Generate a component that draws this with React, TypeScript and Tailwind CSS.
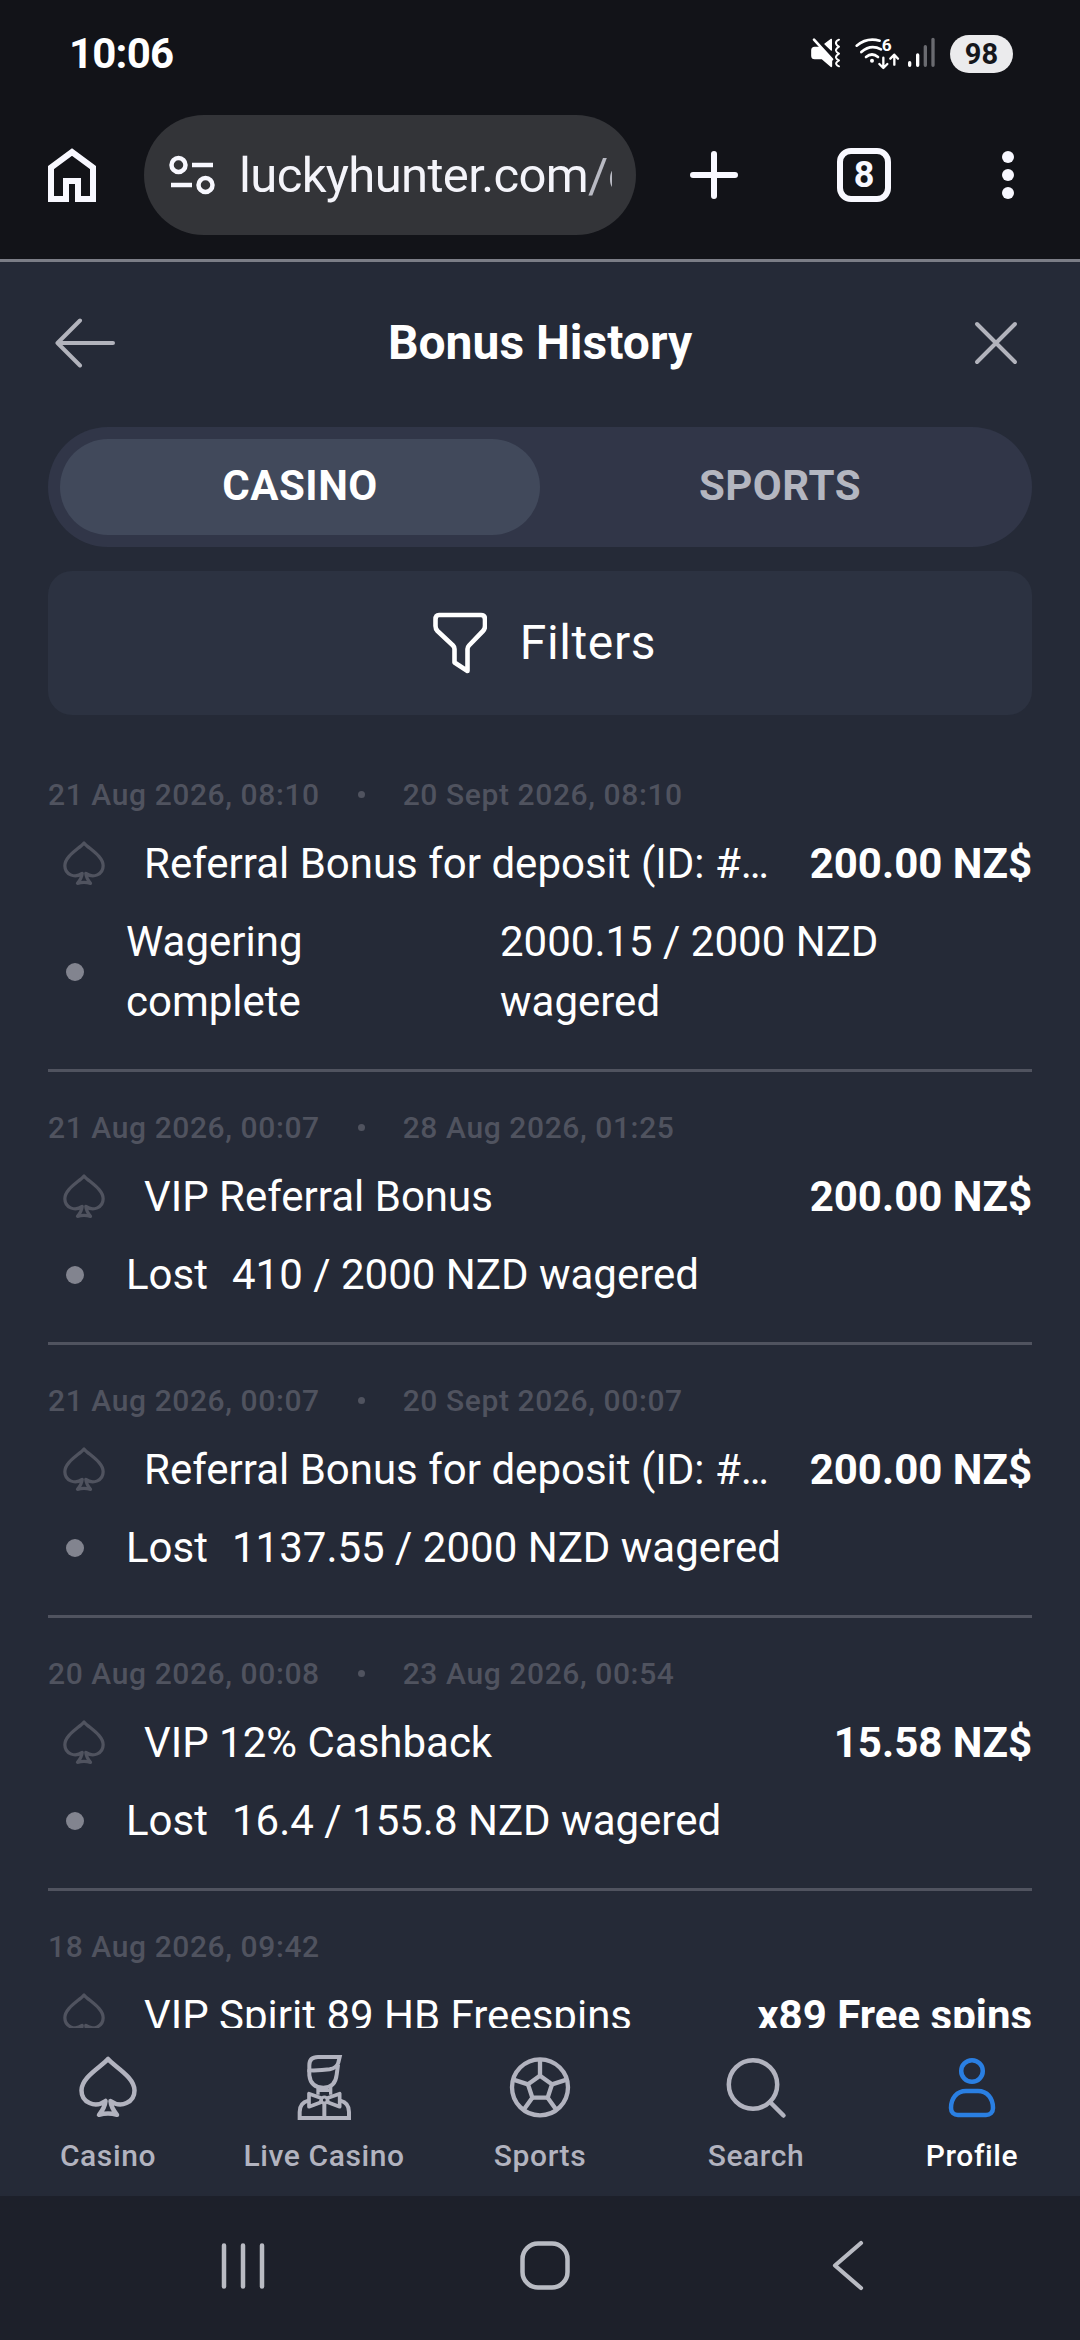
import type { ReactNode } from 'react'
import clsx from 'clsx'

type Bonus = {
  from: string
  to?: string
  title: string
  amount: string
  status: string
  wagered: string
  wide?: boolean
}

const bonuses: Bonus[] = [
  {
    from: '21 Aug 2026, 08:10',
    to: '20 Sept 2026, 08:10',
    title: 'Referral Bonus for deposit (ID: #…',
    amount: '200.00 NZ$',
    status: 'Wagering complete',
    wagered: '2000.15 / 2000 NZD wagered',
    wide: true
  },
  {
    from: '21 Aug 2026, 00:07',
    to: '28 Aug 2026, 01:25',
    title: 'VIP Referral Bonus',
    amount: '200.00 NZ$',
    status: 'Lost',
    wagered: '410 / 2000 NZD wagered'
  },
  {
    from: '21 Aug 2026, 00:07',
    to: '20 Sept 2026, 00:07',
    title: 'Referral Bonus for deposit (ID: #…',
    amount: '200.00 NZ$',
    status: 'Lost',
    wagered: '1137.55 / 2000 NZD wagered'
  },
  {
    from: '20 Aug 2026, 00:08',
    to: '23 Aug 2026, 00:54',
    title: 'VIP 12% Cashback',
    amount: '15.58 NZ$',
    status: 'Lost',
    wagered: '16.4 / 155.8 NZD wagered'
  },
  {
    from: '18 Aug 2026, 09:42',
    title: 'VIP Spirit 89 HB Freespins',
    amount: 'x89 Free spins',
    status: '',
    wagered: ''
  }
]

function Spade({ className }: { className?: string }) {
  return (
    <svg className={className} viewBox="0 0 72 72" fill="none" stroke="currentColor" strokeWidth={4.5} strokeLinecap="round" strokeLinejoin="round">
      <path d="M36 7C29 15 9.500 25 9.500 38.500C9.500 50.500 23 56.500 33.500 49C33 55 30.500 58.500 27 62.800C33 61 39 61 45 62.800C41.500 58.500 39 55 38.500 49C49 56.500 62.500 50.500 62.500 38.500C62.500 25 43 15 36 7Z" />
    </svg>
  )
}

function StatusIcons() {
  return (
    <svg className="w-[140px] h-[60px]" viewBox="0 0 420 180" fill="none" stroke="#fff" strokeLinecap="round" strokeLinejoin="round">
      {/* muted speaker with vibration */}
      <path d="M42 47L96 106" strokeWidth={8} />
      <path d="M94 46V78L75 60Z" fill="#fff" strokeWidth={4} />
      <path d="M44 71H58L94 108V127L66 103H44Q36 103 36 95V79Q36 71 44 71Z" fill="#fff" strokeWidth={5} />
      <path d="M117 47Q106 52 108 59Q110 65 117 68Q107 74 108 80Q109 85 117 89Q107 95 108 101Q109 106 117 109Q106 116 109 121Q111 125 117 127" strokeWidth={6} />
      {/* wifi */}
      <path d="M170 65Q201 39 239 50M184 84Q212 59 243 76M198 99Q216 84 234 99" strokeWidth={8} />
      <circle cx="216" cy="110" r="6" fill="#fff" stroke="none" />
      <text x="245" y="80" fontSize="52" fontWeight="700" fontFamily="Roboto, sans-serif" fill="#fff" stroke="none">6</text>
      <path d="M250 101V131M238 120L250 132L262 120M283 122V93M271 104L283 92L294 104" strokeWidth={7} />
      {/* signal strength */}
      <path d="M329 116V124M353 93V124" strokeWidth={10} />
      <path d="M376 68V124M399 46V124" stroke="#6a6b70" strokeWidth={10} />
    </svg>
  )
}

function StatusBar() {
  return (
    <div className="h-[108px] shrink-0 flex items-center justify-between pl-[69px] pr-[67px]">
      <span className="font-['Roboto'] text-[42px] leading-none font-bold tracking-[-0.8px] text-white">10:06</span>
      <div className="flex items-center">
        <StatusIcons />
        <span className="ml-[10px] w-[63px] h-[38px] rounded-full bg-[#ebebed] text-[#15161b] font-['Roboto'] text-[29px] leading-[38px] font-bold text-center">98</span>
      </div>
    </div>
  )
}

function BrowserBar() {
  return (
    <div className="h-[154px] shrink-0 border-b-[3px] border-[#7b7d86] flex items-start pt-[7px]">
      <div className="w-[144px] h-[120px] flex items-center justify-center">
        <svg className="w-[48px] h-[54px]" viewBox="0 0 48 54" fill="none" stroke="#f8f8ff" strokeWidth={6}>
          <path d="M3 51V19.500L24 4L45 19.500V51H30V33H18V51Z" />
        </svg>
      </div>
      <div className="w-[492px] h-[120px] rounded-full bg-[#333438] flex items-center pl-[25px] pr-6">
        <svg className="w-[46px] h-[40px] shrink-0" viewBox="0 0 46 40" fill="none" stroke="#f8f8ff" strokeWidth={4.500}>
          <circle cx="9.500" cy="10" r="7" />
          <circle cx="36.500" cy="30" r="7" />
          <path d="M23 10H44M2 30H23" />
        </svg>
        <div className="ml-[24px] pt-[2px] flex-1 overflow-hidden whitespace-nowrap font-['Roboto'] text-[49px] leading-[64px] tracking-[-0.65px] text-[#f4f4fa]">
          luckyhunter.com<span className="text-[#b9bac3]">/c</span>
        </div>
      </div>
      <div className="w-[156px] h-[120px] flex items-center justify-center">
        <svg className="w-[48px] h-[48px]" viewBox="0 0 48 48" stroke="#f8f8ff" strokeWidth={6} strokeLinecap="round">
          <path d="M24 3V45M3 24H45" />
        </svg>
      </div>
      <div className="w-[144px] h-[120px] flex items-center justify-center">
        <span className="w-[54px] h-[54px] rounded-[14px] border-[6px] border-[#f8f8ff] flex items-center justify-center font-['Roboto'] text-[36px] leading-none font-bold text-[#f8f8ff]">8</span>
      </div>
      <div className="w-[144px] h-[120px] flex flex-col items-center justify-center gap-[6px]">
        <span className="w-3 h-3 rounded-full bg-[#f8f8ff]" />
        <span className="w-3 h-3 rounded-full bg-[#f8f8ff]" />
        <span className="w-3 h-3 rounded-full bg-[#f8f8ff]" />
      </div>
    </div>
  )
}

function Header() {
  return (
    <div className="h-[165px] shrink-0 grid grid-cols-[1fr_auto_1fr] items-center pb-[4px] pl-[55px] pr-[62px]">
      <svg className="w-[62px] h-[52px]" viewBox="0 0 62 52" fill="none" stroke="#b2b3bc" strokeWidth={4} strokeLinecap="round" strokeLinejoin="round">
        <path d="M25 3.500L2.500 26L25 48.500M2.500 26H58" />
      </svg>
      <h1 className="ml-[7px] text-[48px] leading-[60px] font-bold text-white">Bonus History</h1>
      <svg className="w-[44px] h-[44px] justify-self-end" viewBox="0 0 44 44" stroke="#b2b3bc" strokeWidth={4} strokeLinecap="round">
        <path d="M3 3L41 41M41 3L3 41" />
      </svg>
    </div>
  )
}

function BonusItem({ bonus }: { bonus: Bonus }) {
  return (
    <li className="border-b-[3px] border-[#50535f] pt-[38px] pb-[37px]">
      <div className="flex items-center text-[30px] leading-[36px] font-medium tracking-[0.6px] text-[#50535f]">
        <span>{bonus.from}</span>
        {bonus.to && (
          <>
            <span className="ml-[38px] mr-[38px] mb-[2px] w-[7px] h-[7px] rounded-full bg-[#50535f]" />
            <span>{bonus.to}</span>
          </>
        )}
      </div>
      <div className="mt-[21px] flex items-center text-[42px] leading-[60px] text-white">
        <div className="w-[96px] shrink-0 pl-[10px]">
          <Spade className="w-[52px] h-[52px] text-[#50535f]" />
        </div>
        <span className="flex-1 whitespace-nowrap">{bonus.title}</span>
        <span className="font-bold whitespace-nowrap">{bonus.amount}</span>
      </div>
      <div className="mt-[18px] flex items-center text-[42px] leading-[60px] text-white">
        <span className="ml-[18px] mr-[42px] w-[18px] h-[18px] shrink-0 rounded-full bg-[#82848f]" />
        <span className={clsx(bonus.wide && 'w-[350px] pr-[100px]')}>{bonus.status}</span>
        <span className={clsx('ml-6', bonus.wide && 'w-[430px]')}>{bonus.wagered}</span>
      </div>
    </li>
  )
}

function NavItem({ label, active, children }: { label: string; active?: boolean; children: ReactNode }) {
  return (
    <div className={clsx('flex flex-col items-center pt-6', active ? 'text-[#2a7fe2]' : 'text-[#b2b3bf]')}>
      {children}
      <span className={clsx('mt-[14px] text-[30px] leading-[36px] font-medium tracking-[0.6px]', active && 'text-white')}>{label}</span>
    </div>
  )
}

function BottomNav() {
  return (
    <nav className="h-[168px] shrink-0 grid grid-cols-5 bg-[#252a37]">
      <NavItem label="Casino">
        <Spade className="w-[72px] h-[72px]" />
      </NavItem>
      <NavItem label="Live Casino">
        <svg className="w-[72px] h-[72px]" viewBox="23 36 216 216" fill="none" stroke="currentColor" strokeWidth={12}>
          <path d="M87 91V76Q87 51 113 51H178L174 68Q170 84 148 88Q120 92 87 91Z" />
          <path d="M87 88V106Q91 143 129 143Q165 143 169 104L173 74" />
          <path d="M113 140V164M151 140V164M113 151H151" strokeWidth={10} />
          <path d="M122 174L86 161V200L122 187ZM142 174L178 161V200L142 187Z" strokeWidth={11} strokeLinejoin="round" />
          <circle cx="132" cy="180" r="9" strokeWidth={9} />
          <path d="M58 234V216Q58 188 84 182M206 234V216Q206 188 180 182M52 234H212M132 190V234" />
        </svg>
      </NavItem>
      <NavItem label="Sports">
        <svg className="w-[72px] h-[72px]" viewBox="672 36 216 216" fill="none" stroke="currentColor" strokeWidth={13}>
          <circle cx="780" cy="142" r="84" />
          <path d="M780 107L816 133L803 173H757L744 133Z" />
          <path d="M780 107V58M816 133L860 119M803 173L830 211M757 173L730 211M744 133L700 119" />
        </svg>
      </NavItem>
      <NavItem label="Search">
        <svg className="w-[72px] h-[72px]" viewBox="0 0 72 72" fill="none" stroke="currentColor" strokeWidth={4.500} strokeLinecap="round">
          <circle cx="33" cy="32.500" r="24.200" />
          <path d="M50 50L63.500 63.500" />
        </svg>
      </NavItem>
      <NavItem label="Profile" active>
        <svg className="w-[72px] h-[72px]" viewBox="0 0 72 72" fill="none" stroke="currentColor" strokeWidth={4.500}>
          <circle cx="36" cy="19" r="10.800" />
          <path d="M30 39H42C51 39 57 46 57 56C57 60.500 54 63 50 63H22C18 63 15 60.500 15 56C15 46 21 39 30 39Z" />
        </svg>
      </NavItem>
    </nav>
  )
}

function SystemNav() {
  return (
    <div className="h-[144px] shrink-0 bg-[#1d202a] flex items-center pb-[4px] pl-[218px]">
      <svg className="w-[50px] h-[50px]" viewBox="0 0 50 50" stroke="#b9bbc3" strokeWidth={4.500} strokeLinecap="round">
        <path d="M6 4.500V45.500M25 4.500V45.500M44 4.500V45.500" />
      </svg>
      <svg className="ml-[251px] w-[52px] h-[52px]" viewBox="0 0 52 52" fill="none" stroke="#b9bbc3" strokeWidth={4.500}>
        <rect x="3.500" y="3.500" width="45" height="44" rx="15.500" />
      </svg>
      <svg className="ml-[260px] w-[36px] h-[52px]" viewBox="0 0 36 52" fill="none" stroke="#b9bbc3" strokeWidth={4.200} strokeLinecap="round" strokeLinejoin="round">
        <path d="M30 3L4 25.500L30 48" />
      </svg>
    </div>
  )
}

export default function App() {
  return (
    <div className="w-[1080px] h-[2340px] flex flex-col overflow-hidden bg-[#252a37] font-['Roboto',sans-serif]">
      <div className="bg-[#121318]">
        <StatusBar />
        <BrowserBar />
      </div>
      <Header />
      <div className="mx-12 h-[120px] shrink-0 rounded-full bg-[#313648] p-3 grid grid-cols-2 text-[42px] font-bold tracking-[0.5px]">
        <div className="rounded-full bg-[#41495b] text-white flex items-center justify-center pb-[3px]">CASINO</div>
        <div className="text-[#b4b6c0] flex items-center justify-center pb-[3px]">SPORTS</div>
      </div>
      <div className="mx-12 mt-6 h-[144px] shrink-0 rounded-[24px] bg-[#2c3241] flex items-center justify-center pl-[9px] text-[48px] tracking-[0.6px] text-white">
        <svg className="w-[54px] h-[62px] mr-[33px]" viewBox="1 0 54 62" fill="none" stroke="#fff" strokeWidth={4.600} strokeLinejoin="round">
          <path d="M7 3H49Q53 3 53 7.500V14Q53 17 51 19L37 33.500Q35.500 35 35.500 37V59L22.500 50.500V37Q22.500 35 21 33.500L5.500 19Q3.500 17 3.500 14V7.500Q3.500 3 7 3Z" />
        </svg>
        <span>Filters</span>
      </div>
      <ul className="mx-12 mt-6 flex-1 min-h-0 overflow-hidden">
        {bonuses.map((bonus, index) => (
          <BonusItem key={index} bonus={bonus} />
        ))}
      </ul>
      <BottomNav />
      <SystemNav />
    </div>
  )
}
